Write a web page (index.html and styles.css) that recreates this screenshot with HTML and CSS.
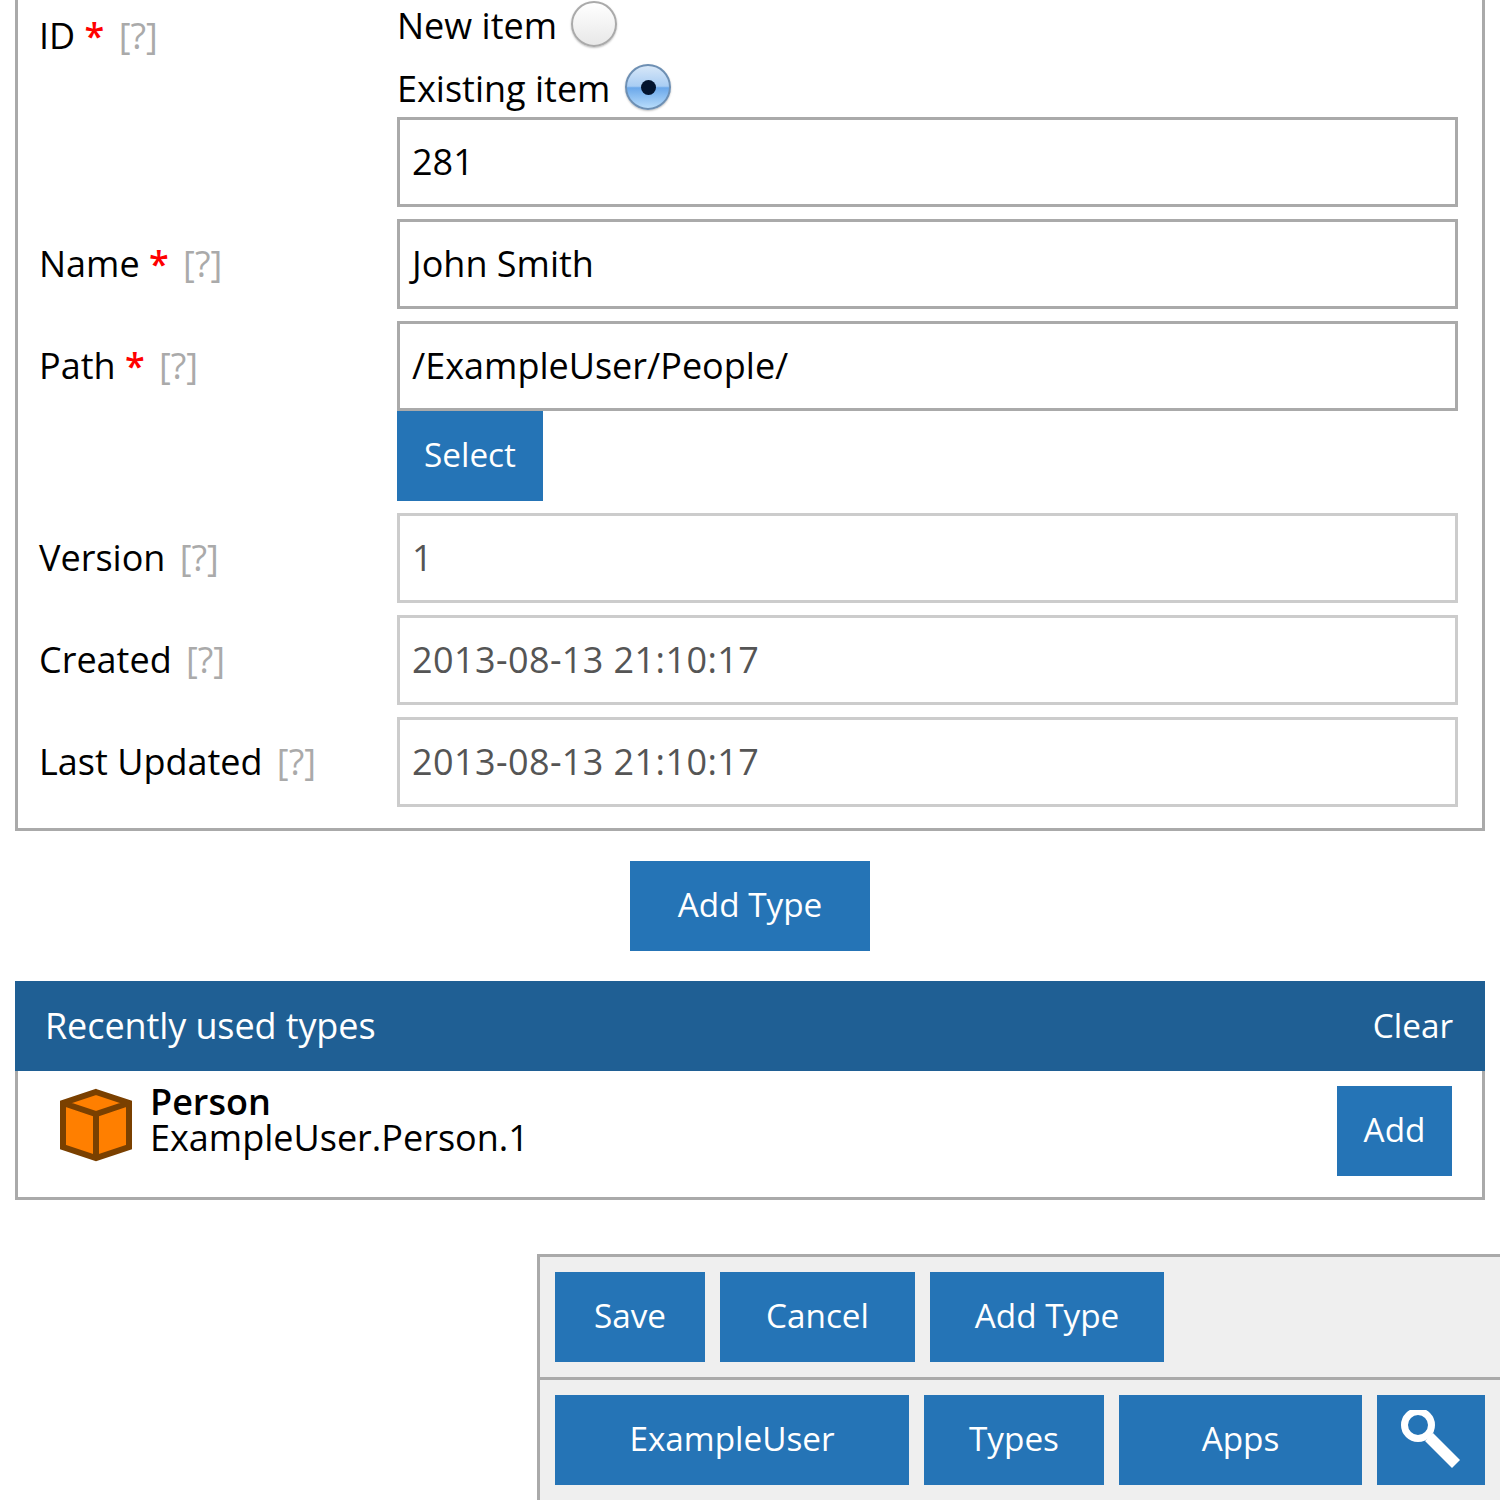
FILE: index.html
```html
<!DOCTYPE html>
<html lang="en">
<head>
<meta charset="utf-8">
<title>Edit item</title>
<link rel="stylesheet" href="styles.css">
</head>
<body>
<div class="page">
  <form class="panel">
    <div class="row row-id">
      <div class="label">ID <span class="req">*</span> <span class="help">[?]</span></div>
      <div class="field">
        <div class="choice choice-new"><span>New item</span><span class="radio"></span></div>
        <div class="choice choice-existing"><span>Existing item</span><span class="radio radio-on"></span></div>
        <div class="input">281</div>
      </div>
    </div>
    <div class="row">
      <div class="label">Name <span class="req">*</span> <span class="help">[?]</span></div>
      <div class="field"><div class="input">John Smith</div></div>
    </div>
    <div class="row">
      <div class="label">Path <span class="req">*</span> <span class="help">[?]</span></div>
      <div class="field"><div class="input">/ExampleUser/People/</div><div class="btn btn-select">Select</div></div>
    </div>
    <div class="row">
      <div class="label">Version <span class="help">[?]</span></div>
      <div class="field"><div class="input input-ro">1</div></div>
    </div>
    <div class="row">
      <div class="label">Created <span class="help">[?]</span></div>
      <div class="field"><div class="input input-ro input-date">2013-08-13 21:10:17</div></div>
    </div>
    <div class="row">
      <div class="label">Last Updated <span class="help">[?]</span></div>
      <div class="field"><div class="input input-ro input-date">2013-08-13 21:10:17</div></div>
    </div>
  </form>

  <div class="center"><div class="btn btn-addtype">Add Type</div></div>

  <section class="recent">
    <header class="recent-head"><span class="recent-title">Recently used types</span><span class="clear">Clear</span></header>
    <div class="recent-body">
      <svg class="cube" width="74" height="74" viewBox="0 0 74 74" aria-hidden="true">
        <path d="M37 2 L72 14 V60 L37 72 L2 60 V14 Z" fill="#ff7f00"/>
        <path d="M37 4 L70 15 V59 L37 70 L4 59 V15 Z M4 15 L37 26 L70 15 M37 26 V70" fill="none" stroke="#7a4000" stroke-width="6" stroke-linejoin="miter"/>
      </svg>
      <div class="type-text"><div class="type-name">Person</div><div class="type-id">ExampleUser.Person.1</div></div>
      <div class="btn btn-add">Add</div>
    </div>
  </section>

  <div class="toolbar">
    <div class="bar bar-top">
      <div class="btn w-save">Save</div>
      <div class="btn w-cancel">Cancel</div>
      <div class="btn w-type">Add Type</div>
    </div>
    <div class="bar">
      <div class="btn w-user">ExampleUser</div>
      <div class="btn w-types">Types</div>
      <div class="btn w-apps">Apps</div>
      <div class="btn w-search">
        <svg width="60" height="60" viewBox="0 0 60 60" aria-hidden="true">
          <circle cx="17" cy="15" r="13.5" fill="none" stroke="#fff" stroke-width="7"/>
          <path d="M24 31 L32 23 L59 50 L51 58 Z" fill="#fff"/>
        </svg>
      </div>
    </div>
  </div>
</div>
</body>
</html>
```
FILE: styles.css
```css
html, body { margin: 0; padding: 0; background: #fff; }
body { font-family: "Open Sans", sans-serif; font-size: 36px; color: #000; height: 1500px; overflow: hidden; }
.page { padding: 0 15px; }
.panel { border: 3px solid #aaa; border-top: 0; padding-bottom: 21px; }
.row { display: flex; margin-top: 12px; padding-left: 21px; padding-right: 24px; }
.row-id { margin-top: 0; }
.label { width: 358px; flex: none; height: 90px; line-height: 90px; white-space: pre-wrap; }
.row-id .label { line-height: 72px; height: 72px; }
.field { flex: 1; min-width: 0; }
.req { color: #f00; font-weight: 600; letter-spacing: -1px; margin-right: 1px; }
.help { color: #aaa; margin-left: 5px; }
.choice { box-sizing: border-box; display: flex; align-items: center; gap: 15px; }
.choice-new { height: 50px; }
.choice-new .radio { margin-left: -1px; }
.choice-existing { height: 67px; padding-top: 9px; }
.radio { width: 46px; height: 46px; margin-bottom: 2px; box-sizing: border-box; border-radius: 50%; border: 2px solid #aaa; background: linear-gradient(#fff, #e8e8e8); box-shadow: 0 1px 2px rgba(0,0,0,.25); display: flex; align-items: center; justify-content: center; }
.radio-on { border-color: #6d8fb3; background: linear-gradient(#d7e7f8 0%, #a9cdf3 48%, #6ba8ea 52%, #b7dcfb 100%); }
.radio-on::after { content: ""; width: 15px; height: 15px; border-radius: 50%; background: #03142e; }
.input { box-sizing: border-box; height: 90px; border: 3px solid #aaa; padding: 0 12px; line-height: 84px; background: #fff; }
.input-ro { border-color: #ccc; color: #555; }
.input-date { letter-spacing: .4px; }
.btn { box-sizing: border-box; background: #2574b6; color: #fff; height: 90px; line-height: 86px; text-align: center; font-size: 33.3px; flex: none; }
.btn-select { width: 146px; }
.center { display: flex; justify-content: center; margin-top: 30px; }
.btn-addtype { width: 240px; }
.recent { margin-top: 30px; }
.recent-head { height: 90px; line-height: 90px; background: #1f5f94; color: #fff; display: flex; justify-content: space-between; padding: 0 32px 0 30px; }
.recent-title { letter-spacing: -.1px; }
.clear { font-size: 33.3px; line-height: 88px; }
.recent-body { box-sizing: border-box; height: 129px; border: 3px solid #aaa; border-top: 0; display: flex; align-items: flex-start; padding: 15px 30px 0 41px; }
.cube { margin-top: 2px; flex: none; }
.type-text { flex: 1; margin: -2px 0 0 17px; line-height: 36px; }
.type-name { font-weight: 600; }
.btn-add { width: 115px; }
.toolbar { margin: 54px -15px 0 522px; border-left: 3px solid #aaa; background: #efefef; border-top: 3px solid #aaa; height: 243px; }
.bar { display: flex; gap: 15px; padding: 15px; height: 90px; }
.bar-top { border-bottom: 3px solid #aaa; }
.w-save { width: 150px; }
.w-cancel { width: 195px; }
.w-type { width: 234px; }
.w-user { width: 354px; }
.w-types { width: 180px; }
.w-apps { width: 243px; }
.w-search { width: 108px; display: flex; align-items: center; padding-left: 24px; }
```
